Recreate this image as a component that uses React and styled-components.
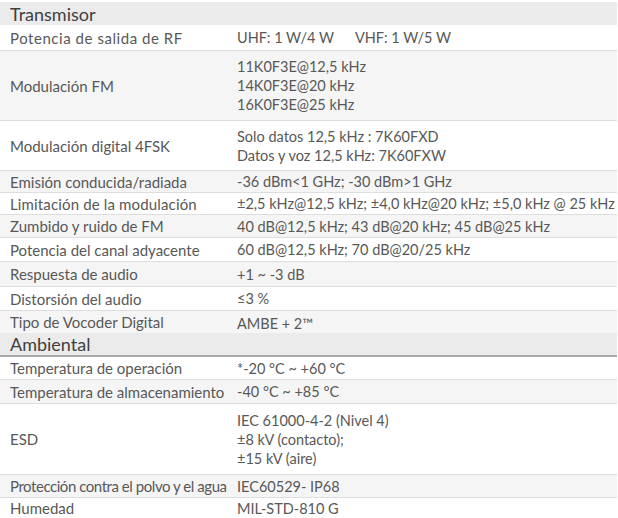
import React from "react";
import styled, { createGlobalStyle } from "styled-components";

const sections = [
  {
    title: "Transmisor",
    rows: [
      { label: "Potencia de salida de RF", value: ["UHF: 1 W/4 W", "VHF: 1 W/5 W"], h: 26, inline: true, spacing: 0.55 },
      { label: "Modulación FM", value: ["11K0F3E@12,5 kHz", "14K0F3E@20 kHz", "16K0F3E@25 kHz"], h: 70 },
      { label: "Modulación digital 4FSK", value: ["Solo datos 12,5 kHz : 7K60FXD", "Datos y voz 12,5 kHz: 7K60FXW"], h: 50 },
      { label: "Emisión conducida/radiada", value: ["-36 dBm<1 GHz; -30 dBm>1 GHz"], h: 22 },
      { label: "Limitación de la modulación", value: ["±2,5 kHz@12,5 kHz; ±4,0 kHz@20 kHz; ±5,0 kHz @ 25 kHz"], h: 22, spacing: 0.15 },
      { label: "Zumbido y ruido de FM", value: ["40 dB@12,5 kHz; 43 dB@20 kHz; 45 dB@25 kHz"], h: 23 },
      { label: "Potencia del canal adyacente", value: ["60 dB@12,5 kHz; 70 dB@20/25 kHz"], h: 24 },
      { label: "Respuesta de audio", value: ["+1 ~ -3 dB"], h: 25 },
      { label: "Distorsión del audio", value: ["≤3 %"], h: 24 },
      { label: "Tipo de Vocoder Digital", value: ["AMBE + 2™"], h: 22, last: true, drop: 3 },
    ],
  },
  {
    title: "Ambiental",
    rule: true,
    rows: [
      { label: "Temperatura de operación", value: ["*-20 °C ~ +60 °C"], h: 23 },
      { label: "Temperatura de almacenamiento", value: ["-40 °C ~ +85 °C"], h: 24 },
      { label: "ESD", value: ["IEC 61000-4-2 (Nivel 4)", "±8 kV (contacto);", "±15 kV (aire)"], h: 71 },
      { label: "Protección contra el polvo y el agua", value: ["IEC60529- IP68"], h: 23, spacing: -0.45 },
      { label: "Humedad", value: ["MIL-STD-810 G"], h: 20, last: true },
    ],
  },
];

const Global = createGlobalStyle`
  body {
    margin: 0;
    background: #ffffff;
    font-family: "Lato", "Liberation Sans", sans-serif;
  }
`;

const Table = styled.div`
  width: 617px;
  padding-top: 2px;
  color: #585858;
  font-size: 15px;
`;

const Header = styled.div`
  height: ${(p) => (p.rule ? 22 : 23)}px;
  display: flex;
  align-items: center;
  padding-left: 10px;
  background: #ebebeb;
  border-bottom: ${(p) => (p.rule ? "2px solid #a8a8a8" : "none")};
  color: #3f3f3f;
  font-size: 18px;
`;

const Row = styled.div`
  display: grid;
  grid-template-columns: 237px 1fr;
  box-sizing: border-box;
  height: ${(p) => p.h}px;
  background: ${(p) => (p.shade ? "#f5f5f5" : "#ffffff")};
  border-bottom: ${(p) => (p.last ? "none" : "1px solid #dedede")};
`;

const Label = styled.div`
  display: flex;
  align-items: center;
  padding-left: 10px;
  white-space: nowrap;
  letter-spacing: ${(p) => p.spacing || 0}px;
`;

const Value = styled.div`
  display: flex;
  flex-direction: ${(p) => (p.inline ? "row" : "column")};
  align-items: ${(p) => (p.inline ? "center" : "stretch")};
  justify-content: ${(p) => (p.inline ? "flex-start" : "center")};
  gap: ${(p) => (p.inline ? "21px" : "0")};
  white-space: nowrap;
  font-size: 14.5px;
  line-height: 19px;
  padding-top: ${(p) => p.drop || 0}px;
`;

export default function App() {
  return (
    <>
      <Global />
      <Table>
        {sections.map((s) => (
          <React.Fragment key={s.title}>
            <Header rule={s.rule}>{s.title}</Header>
            {s.rows.map((r, i) => (
              <Row key={r.label} h={r.h} shade={i % 2 === 1} last={r.last}>
                <Label spacing={r.spacing}>{r.label}</Label>
                <Value drop={r.drop} inline={r.inline}>
                  {r.value.map((v) => (
                    <span key={v}>{v}</span>
                  ))}
                </Value>
              </Row>
            ))}
          </React.Fragment>
        ))}
      </Table>
    </>
  );
}
